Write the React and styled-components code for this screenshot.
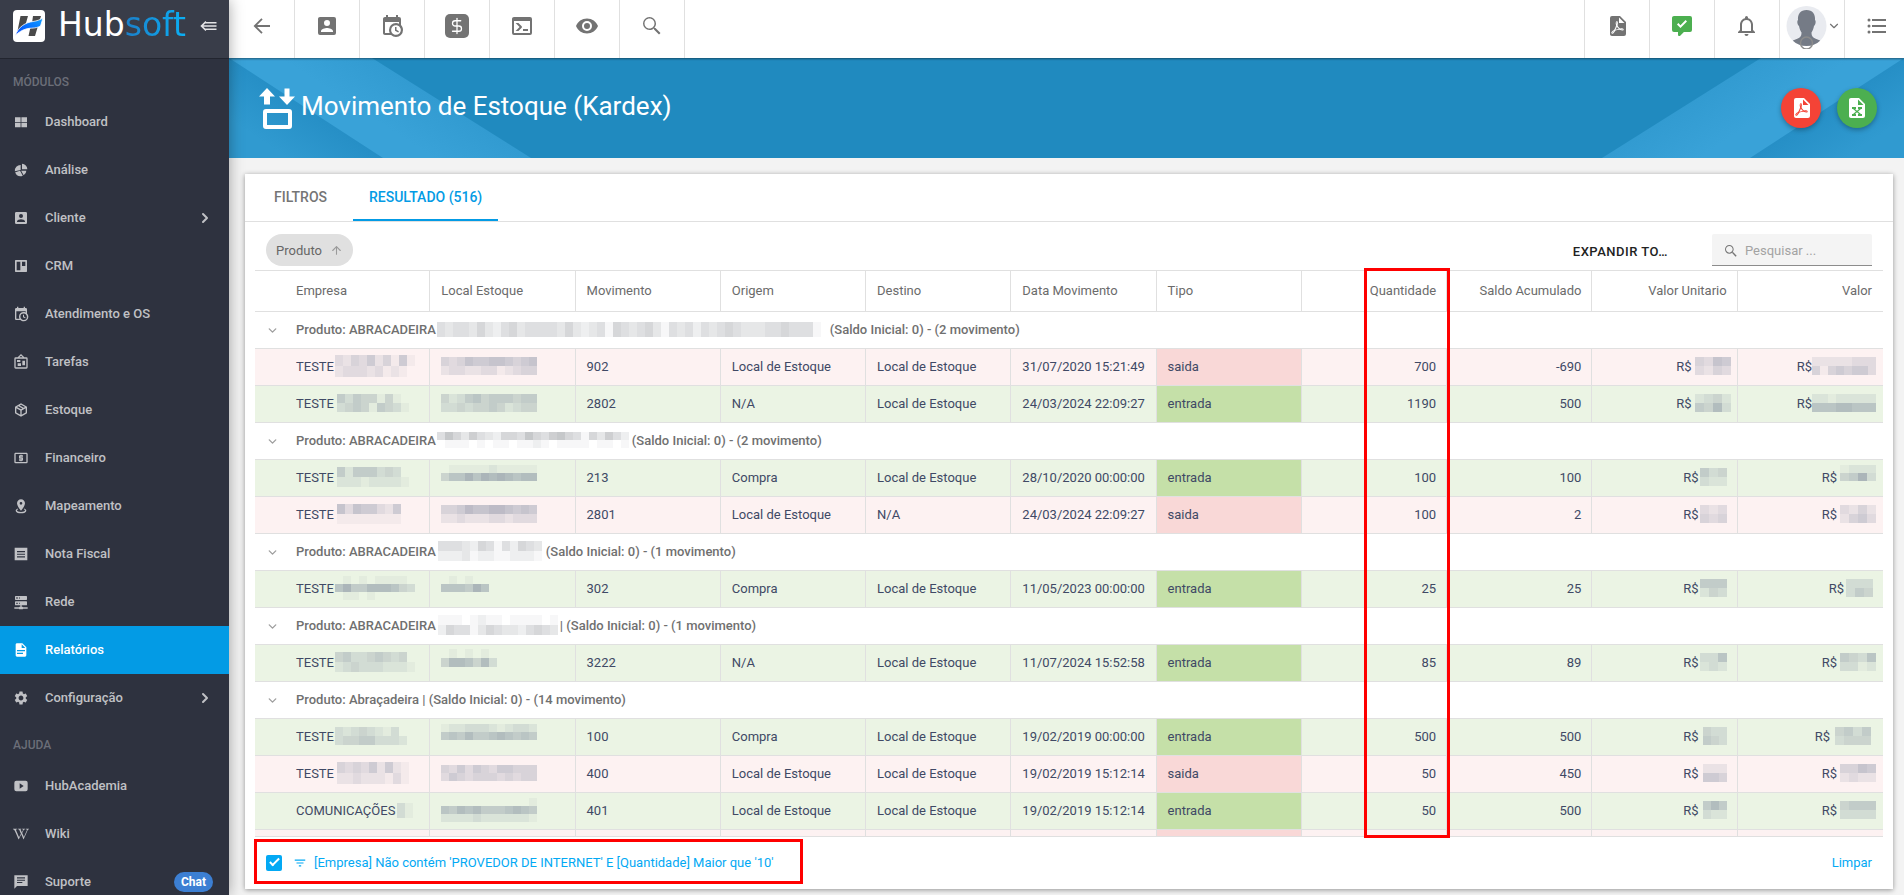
import React from "react";
import styled, { createGlobalStyle, css } from "styled-components";
import { DollarSign, ChevronRight, ChevronDown, ArrowUp } from "lucide-react";
import { MdSettings } from "react-icons/md";
import { FaWikipediaW } from "react-icons/fa";

const Global = createGlobalStyle`
  *, *::before, *::after { box-sizing: border-box; }
  body { margin: 0; font-family: Roboto, "Liberation Sans", sans-serif; font-size: 13px; background: #f3f3f3; }
  button, input { font: inherit; }
  button { border: 0; padding: 0; background: none; color: inherit; cursor: pointer; }
  a { color: inherit; text-decoration: none; }
  svg { display: block; flex: none; }
`;

const paths = {
  accountBox: "M6,17C6,15 10,13.9 12,13.9C14,13.9 18,15 18,17V18H6M15,9A3,3 0 0,1 12,12A3,3 0 0,1 9,9A3,3 0 0,1 12,6A3,3 0 0,1 15,9M3,5V19A2,2 0 0,0 5,21H19A2,2 0 0,0 21,19V5A2,2 0 0,0 19,3H5C3.89,3 3,3.9 3,5Z",
  calendarClock: "M15,13H16.5V15.82L18.94,17.23L18.19,18.53L15,16.69V13M19,8H5V19H9.67C9.24,18.09 9,17.07 9,16A7,7 0 0,1 16,9C17.07,9 18.09,9.24 19,9.67V8M5,21C3.89,21 3,20.1 3,19V5C3,3.89 3.89,3 5,3H6V1H8V3H16V1H18V3H19A2,2 0 0,1 21,5V11.1C22.24,12.36 23,14.09 23,16A7,7 0 0,1 16,23C14.09,23 12.36,22.24 11.1,21H5M16,11.15A4.85,4.85 0 0,0 11.15,16C11.15,18.68 13.32,20.85 16,20.85A4.85,4.85 0 0,0 20.85,16C20.85,13.32 18.68,11.15 16,11.15Z",
  eye: "M12,9A3,3 0 0,0 9,12A3,3 0 0,0 12,15A3,3 0 0,0 15,12A3,3 0 0,0 12,9M12,17A5,5 0 0,1 7,12A5,5 0 0,1 12,7A5,5 0 0,1 17,12A5,5 0 0,1 12,17M12,4.5C7,4.5 2.73,7.61 1,12C2.73,16.39 7,19.5 12,19.5C17,19.5 21.27,16.39 23,12C21.27,7.61 17,4.5 12,4.5Z",
  console: "M20,19V7H4V19H20M20,3A2,2 0 0,1 22,5V19A2,2 0 0,1 20,21H4A2,2 0 0,1 2,19V5C2,3.89 2.9,3 4,3H20M13,17V15H18V17H13M9.58,13L5.57,9H8.4L11.7,12.3C12.09,12.69 12.09,13.33 11.7,13.72L8.42,17H5.59L9.58,13Z",
  bell: "M16,17H7V10.5C7,8 9,6 11.5,6C14,6 16,8 16,10.5M18,16V10.5C18,7.43 15.86,4.86 13,4.18V3.5A1.5,1.5 0 0,0 11.5,2A1.5,1.5 0 0,0 10,3.5V4.18C7.13,4.86 5,7.43 5,10.5V16L3,18V19H20V18M11.5,22A2,2 0 0,0 13.5,20H9.5A2,2 0 0,0 11.5,22Z",
  list: "M7,5H21V7H7V5M7,13V11H21V13H7M4,4.5A1.5,1.5 0 0,1 5.5,6A1.5,1.5 0 0,1 4,7.5A1.5,1.5 0 0,1 2.5,6A1.5,1.5 0 0,1 4,4.5M4,10.5A1.5,1.5 0 0,1 5.5,12A1.5,1.5 0 0,1 4,13.5A1.5,1.5 0 0,1 2.5,12A1.5,1.5 0 0,1 4,10.5M7,19V17H21V19H7M4,16.5A1.5,1.5 0 0,1 5.5,18A1.5,1.5 0 0,1 4,19.5A1.5,1.5 0 0,1 2.5,18A1.5,1.5 0 0,1 4,16.5Z",
  magnify: "M9.5,3A6.5,6.5 0 0,1 16,9.5C16,11.11 15.41,12.59 14.44,13.73L14.71,14H15.5L20.5,19L19,20.5L14,15.5V14.71L13.73,14.44C12.59,15.41 11.11,16 9.5,16A6.5,6.5 0 0,1 3,9.5A6.5,6.5 0 0,1 9.5,3M9.5,4.5C6.7,4.5 4.5,6.7 4.5,9.5C4.5,12.3 6.7,14.5 9.5,14.5C12.3,14.5 14.5,12.3 14.5,9.5C14.5,6.7 12.3,4.5 9.5,4.5Z",
  commentCheck: "M9,22A1,1 0 0,1 8,21V18H4A2,2 0 0,1 2,16V4C2,2.89 2.9,2 4,2H20A2,2 0 0,1 22,4V16A2,2 0 0,1 20,18H13.9L10.2,21.71C10,21.9 9.75,22 9.5,22V22H9M10.47,14L17,7.41L15.6,6L10.47,11.17L8.4,9.09L7,10.5L10.47,14Z",
  pdf: "M14,9H19.5L14,3.5V9M7,2H15L21,8V20A2,2 0 0,1 19,22H7C5.89,22 5,21.1 5,20V4A2,2 0 0,1 7,2M11.93,12.44C12.34,13.34 12.86,14.08 13.46,14.59L13.87,14.91C13,15.07 11.8,15.35 10.53,15.84V15.84L10.42,15.88L10.92,14.84C11.37,13.97 11.7,13.18 11.93,12.44M18.41,16.25C18.59,16.07 18.68,15.84 18.69,15.59C18.72,15.39 18.67,15.2 18.57,15.04C18.28,14.57 17.53,14.35 16.29,14.35L15,14.42L14.13,13.84C13.5,13.32 12.93,12.41 12.53,11.28L12.57,11.14C12.9,9.81 13.21,8.2 12.55,7.54C12.39,7.38 12.17,7.3 11.94,7.3H11.7C11.33,7.3 11,7.69 10.91,8.07C10.54,9.4 10.76,10.13 11.13,11.34V11.35C10.88,12.23 10.56,13.25 10.05,14.28L9.09,16.08L8.2,16.57C7,17.32 6.43,18.16 6.32,18.69C6.28,18.88 6.3,19.05 6.37,19.23L6.4,19.28L6.88,19.59L7.32,19.7C8.13,19.7 9.05,18.75 10.29,16.63L10.47,16.56C11.5,16.23 12.78,16 14.5,15.81C15.53,16.32 16.74,16.55 17.5,16.55C17.94,16.55 18.24,16.44 18.41,16.25M18,15.54L18.09,15.65C18.08,15.75 18.05,15.76 18,15.78H17.96L17.77,15.8C17.31,15.8 16.6,15.61 15.87,15.29C15.96,15.19 16,15.19 16.1,15.19C17.5,15.19 17.9,15.44 18,15.54M8.83,17C8.18,18.19 7.59,18.85 7.14,19C7.19,18.62 7.64,17.96 8.35,17.31L8.83,17M11.85,10.09C11.62,9.19 11.61,8.46 11.78,8.04L11.85,7.92L12,7.97C12.17,8.21 12.19,8.53 12.09,9.07L12.06,9.23L11.9,10.05L11.85,10.09Z",
  excel: "M13,9H18.5L13,3.5V9M6,2H14L20,8V20A2,2 0 0,1 18,22H6C4.89,22 4,21.1 4,20V4C4,2.89 4.89,2 6,2M17,11H13V13H14L12,14.67L10,13H11V11H7V13H8L11,15.5L8,18H7V20H11V18H10L12,16.33L14,18H13V20H17V18H16L13,15.5L16,13H17V11Z",
  filter: "M6,13H18V11H6M3,6V8H21V6M10,18H14V16H10V18Z",
  box: "M21,16.5C21,16.88 20.79,17.21 20.47,17.38L12.57,21.82C12.41,21.94 12.21,22 12,22C11.79,22 11.59,21.94 11.43,21.82L3.53,17.38C3.21,17.21 3,16.88 3,16.5V7.5C3,7.12 3.21,6.79 3.53,6.62L11.43,2.18C11.59,2.06 11.79,2 12,2C12.21,2 12.41,2.06 12.57,2.18L20.47,6.62C20.79,6.79 21,7.12 21,7.5V16.5M12,4.15L10.11,5.22L16,8.61L17.96,7.5L12,4.15M6.04,7.5L12,10.85L13.96,9.75L8.08,6.35L6.04,7.5M5,15.91L11,19.29V12.58L5,9.21V15.91M19,15.91V9.21L13,12.58V19.29L19,15.91Z",
  dashboard: "M3,5H11.4V12H3ZM12.6,5H21V12H12.6ZM3,13.2H11.4V20H3ZM12.6,13.2H21V20H12.6Z",
  pie: "M21.5,11H13.5V2.5A8.5,8.5 0 0,1 21.5,11M20,13A8.5,8.5 0 0,1 16,20L12.2,13H20M11,21.5A8.5,8.5 0 0,1 3.3,15.5L10.6,13L14.7,20.6A8.5,8.5 0 0,1 11,21.5M2.8,14A8.5,8.5 0 0,1 11.5,4.5V12Z",
  trello: "M4,3H20A1,1 0 0,1 21,4V20A1,1 0 0,1 20,21H4A1,1 0 0,1 3,20V4A1,1 0 0,1 4,3M5.5,5.5V18.5H11V5.5H5.5M13.5,5.5V12H18.5V5.5H13.5Z",
  board: "M12.04,2.5L9.53,5H14.53L12.04,2.5M4,7V20H20V7H4M12,0L17,5V5H20A2,2 0 0,1 22,7V20A2,2 0 0,1 20,22H4A2,2 0 0,1 2,20V7A2,2 0 0,1 4,5H7V5L12,0M7,18V14H12V18H7M14,17V10H18V17H14M6,12V9H11V12H6Z",
  cash: "M20,18H4V6H20M20,4H4C2.89,4 2,4.89 2,6V18A2,2 0 0,0 4,20H20A2,2 0 0,0 22,18V6C22,4.89 21.1,4 20,4M11,17H13V16H14A1,1 0 0,0 15,15V12A1,1 0 0,0 14,11H11V10H15V8H13V7H11V8H10A1,1 0 0,0 9,9V12A1,1 0 0,0 10,13H13V14H9V16H11V17Z",
  marker: "M12,2C15.31,2 18,4.66 18,7.95C18,12.41 12,19 12,19C12,19 6,12.41 6,7.95C6,4.66 8.69,2 12,2M12,6A2,2 0 0,0 10,8A2,2 0 0,0 12,10A2,2 0 0,0 14,8A2,2 0 0,0 12,6M20,19C20,21.21 16.42,23 12,23C7.58,23 4,21.21 4,19C4,17.71 5.22,16.56 7.11,15.83L7.75,16.74C6.67,17.19 6,17.81 6,18.5C6,19.88 8.69,21 12,21C15.31,21 18,19.88 18,18.5C18,17.81 17.33,17.19 16.25,16.74L16.89,15.83C18.78,16.56 20,17.71 20,19Z",
  invoice: "M2.5,2.5H21.5V21.5H2.5ZM6,7.5V9.2H18V7.5ZM6,11.5V13.2H18V11.5ZM6,15.5V17.2H18V15.5Z",
  server: "M13,19H14A1,1 0 0,1 15,20H22V22H15A1,1 0 0,1 14,23H10A1,1 0 0,1 9,22H2V20H9A1,1 0 0,1 10,19H11V17H4A1,1 0 0,1 3,16V12A1,1 0 0,1 4,11H20A1,1 0 0,1 21,12V16A1,1 0 0,1 20,17H13V19M4,3H20A1,1 0 0,1 21,4V8A1,1 0 0,1 20,9H4A1,1 0 0,1 3,8V4A1,1 0 0,1 4,3M9,7H10V5H9V7M9,15H10V13H9V15M5,5V7H7V5H5M5,13V15H7V13H5Z",
  document: "M13,9H18.5L13,3.5V9M6,2H14L20,8V20A2,2 0 0,1 18,22H6C4.89,22 4,21.1 4,20V4C4,2.89 4.89,2 6,2M15,18V16H6V18H15M18,14V12H6V14H18Z",
  play: "M5,4H19A3,3 0 0,1 22,7V17A3,3 0 0,1 19,20H5A3,3 0 0,1 2,17V7A3,3 0 0,1 5,4ZM10,8V16L16,12Z",
  message: "M2,2H22V18H6L2,22ZM6,5V6.6H18V5ZM6,8.5V10.1H18V8.5ZM6,12V13.6H14V12Z",
};

const Icon = ({ name, size = 24 }) => (
  <svg width={size} height={size} viewBox="0 0 24 24" fill="currentColor" fillRule="evenodd" aria-hidden="true">
    <path d={paths[name]} />
  </svg>
);

const Shell = styled.div`
  display: grid;
  grid-template-columns: 229px minmax(0, 1fr);
  height: 100vh;
`;

/* ---------- sidebar ---------- */
const Sidebar = styled.aside`
  position: relative;
  z-index: 2;
  overflow: hidden;
  background: #2e323f;
  color: #c0c1c5;
  box-shadow: 0 0 14px rgba(0, 0, 0, 0.35);
`;
const Brand = styled.div`
  display: flex;
  align-items: flex-start;
  gap: 13px;
  height: 59px;
  padding: 10px 0 0 13px;
  background: #393d49;
  border-bottom: 1px solid #22252f;
`;
const BrandName = styled.span`
  font: 33px/30px "DejaVu Sans", sans-serif;
  color: #fff;
  span {
    background: linear-gradient(90deg, #1b7fc9, #0bb0f5);
    -webkit-background-clip: text;
    background-clip: text;
    color: transparent;
  }
`;
const Collapse = styled.button`
  margin: 11px 0 0 auto;
  padding-right: 12px;
  color: #e4e4e6;
`;
const NavTitle = styled.h2`
  margin: 0;
  padding: 14px 13px 0;
  height: ${(p) => (p.$first ? "39px" : "40px")};
  font-size: 12px;
  line-height: 18px;
  font-weight: 500;
  color: #6b6e78;
`;
const NavItem = styled.a`
  display: flex;
  align-items: center;
  height: 48px;
  padding: 0 16px 0 13px;
  gap: 16px;
  font-weight: 500;
  line-height: 18px;
  ${(p) => p.$active && css`background: #039be5; color: #fff;`}
  > :last-child:not(:nth-child(2)) { margin-left: auto; }
`;
const NavLabel = styled.span`
  padding-bottom: 1px;
`;
const Badge = styled.span`
  padding: 0 7px;
  border-radius: 10px;
  background: #3c7fd3;
  color: #fff;
  font-size: 12px;
  font-weight: 700;
  line-height: 20px;
`;

/* ---------- top bar ---------- */
const Main = styled.main`
  display: flex;
  flex-direction: column;
  min-width: 0;
  min-height: 0;
`;
const TopBar = styled.header`
  display: flex;
  justify-content: space-between;
  height: 58px;
  background: #fff;
  color: #737373;
  box-shadow: 0 1px 2px rgba(0, 0, 0, 0.45);
  z-index: 1;
`;
const BarGroup = styled.div`
  display: flex;
  &:first-child { padding-left: 1px; }
`;
const BarButton = styled.button`
  display: flex;
  align-items: center;
  justify-content: center;
  width: ${(p) => (p.$last ? "60px" : "65px")};
  padding: 0 0 6px ${(p) => (p.$last ? "4px" : "0")};
  color: ${(p) => p.$color || "inherit"};
  border-${(p) => p.$side}: 1px solid #e0e0e0;
`;
const DollarBox = styled.span`
  display: grid;
  place-items: center;
  width: 24px;
  height: 24px;
  border-radius: 5px;
  background: #737373;
  color: #fff;
`;

/* ---------- banner ---------- */
const Banner = styled.section`
  position: relative;
  display: flex;
  align-items: center;
  flex: none;
  height: 100px;
  padding: 0 27px 0 30px;
  background: #208abf;
  color: #fff;
  > * { position: relative; }
`;
const Stripes = styled.svg`
  && {
    position: absolute;
    top: 0;
    ${(p) => (p.$right ? "right: 0; transform: scaleX(-1);" : "left: 0;")}
  }
`;
const Title = styled.h1`
  margin: 0 auto 0 6px;
  padding-bottom: 4px;
  font-size: 26px;
  line-height: 32px;
  font-weight: 400;
`;
const Fab = styled.button`
  display: grid;
  place-items: center;
  width: 40px;
  height: 40px;
  margin-left: 16px;
  border-radius: 50%;
  background: ${(p) => p.$color};
  box-shadow: 0 2px 5px rgba(0, 0, 0, 0.3);
`;

/* ---------- card ---------- */
const Card = styled.section`
  display: flex;
  flex-direction: column;
  flex: 1;
  min-height: 0;
  margin: 16px 11px 6px 16px;
  background: #fff;
  box-shadow: 0 1px 5px rgba(0, 0, 0, 0.4);
`;
const Tabs = styled.div`
  display: flex;
  gap: 2px;
  flex: none;
  height: 48px;
  padding-left: 5px;
  border-bottom: 1px solid #e0e0e0;
`;
const Tab = styled.button`
  height: 47px;
  padding: 2px ${(p) => (p.$active ? "16px" : "24px")} ${(p) => (p.$active ? "2px" : "4px")};
  font-size: 14px;
  font-weight: 500;
  color: ${(p) => (p.$active ? "#039be5" : "#757575")};
  border-bottom: ${(p) => (p.$active ? "2px solid #039be5" : "0")};
`;
const Grid = styled.div`
  position: relative;
  display: flex;
  flex-direction: column;
  flex: 1;
  min-height: 0;
  padding: 0 10px;
`;
const Toolbar = styled.div`
  display: flex;
  align-items: center;
  flex: none;
  height: 48px;
  padding: 10px 11px 0;
`;
const Chip = styled.button`
  display: flex;
  align-items: center;
  gap: 8px;
  height: 32px;
  margin: 0 auto 2px 0;
  padding: 0 10px;
  border-radius: 16px;
  background: #e0e0e0;
  color: #666;
  font-weight: 400;
  svg { color: #9a9a9a; }
`;
const ExpandButton = styled.button`
  margin-right: 44px;
  color: #222;
  font-weight: 500;
  letter-spacing: 0.5px;
`;
const Search = styled.label`
  display: flex;
  align-items: center;
  gap: 6px;
  width: 160px;
  height: 32px;
  margin-bottom: 2px;
  padding: 2px 0 0 11px;
  border-bottom: 1px solid #8c8c8c;
  border-radius: 2px 2px 0 0;
  background: #f4f4f4;
  color: #757575;
`;
const SearchInput = styled.input`
  width: 100%;
  min-width: 0;
  padding: 0;
  border: 0;
  outline: 0;
  background: none;
  &::placeholder { color: #a3a3a3; opacity: 1; }
`;
const TableArea = styled.div`
  position: relative;
  display: flex;
  flex: 1;
  min-height: 0;
`;
const TableClip = styled.div`
  flex: 1;
  overflow: hidden;
  border-top: 1px solid #e0e0e0;
  border-bottom: 1px solid #e0e0e0;
`;
const ColumnFrame = styled.div`
  position: absolute;
  top: -2px;
  bottom: -1px;
  right: calc((100% - 30px) * 3 / 11 - 3px);
  width: 86px;
  border: 3px solid #f00;
  pointer-events: none;
`;
const Table = styled.table`
  width: 100%;
  table-layout: fixed;
  border-collapse: separate;
  border-spacing: 0;
  color: #404965;
`;
const Head = styled.th`
  height: 41px;
  padding: 0 ${(p) => (p.$open ? "11px" : "10px")} 2px 11px;
  text-align: ${(p) => p.$align || "left"};
  font-weight: 400;
  color: #6b6b6b;
  border-bottom: 1px solid #e0e0e0;
  border-right: ${(p) => (p.$open ? "0" : "1px")} solid #e0e0e0;
  white-space: nowrap;
`;
const Row = styled.tr`
  background: ${(p) => (p.$kind === "saida" ? "#fdf2f2" : "#ebf4e4")};
`;
const Cell = styled.td`
  height: 37px;
  padding: 0 ${(p) => (p.$open ? "11px" : "10px")} 2px 11px;
  text-align: ${(p) => p.$align || "left"};
  font-weight: 400;
  border-bottom: 1px solid #e0e0e0;
  border-right: ${(p) => (p.$open ? "0" : "1px")} solid #e0e0e0;
  white-space: nowrap;
  ${(p) => p.$kind && css`background: ${p.$kind === "saida" ? "#f9d8d7" : "#c5e0a8"};`}
`;
const Line = styled.div`
  display: flex;
  align-items: center;
  justify-content: ${(p) => (p.$end ? "flex-end" : "flex-start")};
  gap: ${(p) => p.$gap || 0}px;
`;
const GroupCell = styled(Cell)`
  font-weight: 500;
  color: #707070;
  border-right: 0;
`;
const GroupTail = styled.span`
  margin-left: ${(p) => p.$space || 0}px;
`;
const Toggle = styled.button`
  display: block;
  margin-top: 2px;
  color: #9e9e9e;
`;
const HiddenValue = styled.span`
  display: flex;
  align-items: center;
  width: ${(p) => p.$width}px;
  padding-left: ${(p) => p.$gap}px;
`;
const Footer = styled.footer`
  display: flex;
  align-items: center;
  justify-content: space-between;
  flex: none;
  height: 52px;
  padding-right: 11px;
  color: #03a9f4;
`;
const FilterFrame = styled.div`
  display: flex;
  align-items: center;
  height: 45px;
  margin: 0 0 3px -1px;
  padding: 2px 26px 0 9px;
  border: 3px solid #f00;
`;
const Check = styled.input`
  appearance: none;
  display: grid;
  place-items: center;
  width: 16px;
  height: 16px;
  margin: 0 11px 0 0;
  border-radius: 2px;
  background: #03a9f4;
  &::after {
    content: "";
    width: 5px;
    height: 10px;
    margin-top: -3px;
    border: solid #fff;
    border-width: 0 2px 2px 0;
    transform: rotate(45deg);
  }
`;
const FilterLink = styled.a`
  margin-left: 7px;
`;
const ClearLink = styled.a`
  padding-bottom: 2px;
`;

/* Pixelated block hiding a private value: each digit is the darkness of one tile. */
const Mosaic = ({ rows, w = 8, h = 9, tint = "#65718a" }) => {
  const cols = Math.max(...rows.map((r) => r.length));
  return (
    <svg width={cols * w} height={rows.length * h} shapeRendering="crispEdges" aria-hidden="true">
      {rows.flatMap((r, y) =>
        [...r].map((d, x) => (
          <rect key={`${x}-${y}`} x={x * w} y={y * h} width={w} height={h} fill={tint} fillOpacity={Number(d) * 0.06} />
        ))
      )}
    </svg>
  );
};

const modules = [
  ["Dashboard", "dashboard"], ["Análise", "pie"], ["Cliente", "accountBox", true], ["CRM", "trello"],
  ["Atendimento e OS", "calendarClock"], ["Tarefas", "board"], ["Estoque", "box"], ["Financeiro", "cash"],
  ["Mapeamento", "marker"], ["Nota Fiscal", "invoice"], ["Rede", "server"], ["Relatórios", "document"],
];

const L = "Local de Estoque";
const groups = [
  {
    name: "ABRACADEIRA", tail: "(Saldo Inicial: 0) - (2 movimento)", gap: 1, after: 8,
    mask: { rows: ["434435324534444353234154345314342434543334454441"], h: 15, tint: "#777b80" },
    items: [
      { e: "TESTE", em: ["3243524151", "2333231210"], eh: 11, eg: 1, lm: ["434655665456", "233223312344"], mov: "902", o: L, d: L, t: "31/07/2020 15:21:49", k: "saida", q: "700", s: "-690", u: [35, 3, ["4365", "3243"]], uw: 9, v: [60, 0, ["22222333", "41454553"]] },
      { e: "TESTE", em: ["535441410", "345415431"], eg: 3, lm: ["423564555455", "334344542344"], mov: "2802", o: "N/A", d: L, t: "24/03/2024 22:09:27", k: "entrada", q: "1190", s: "500", u: [35, 3, ["2342", "5473"]], uw: 9, v: [60, 0, ["22122222", "66677666"]] },
    ],
  },
  {
    name: "ABRACADEIRA", tail: "(Saldo Inicial: 0) - (2 movimento)", gap: 1, after: 2,
    mask: { rows: ["475364325547546754153642", "011101011011210111101101"], h: 8, tint: "#777b80" },
    items: [
      { e: "TESTE", em: ["52555343", "222122221"], eh: 10, eg: 3, lm: ["011111211111", "466868787677", "0"], lh: 8, mov: "213", o: "Compra", d: L, t: "28/10/2020 00:00:00", k: "entrada", q: "100", s: "100", u: [28, 1, ["534", "322"]], uw: 9, v: [35, 3, ["1222", "4583", "0"]], vw: 9, vh: 8 },
      { e: "TESTE", em: ["63655325", "111111110"], eh: 10, eg: 3, lm: ["445766776565", "223222332333"], mov: "2801", o: L, d: "N/A", t: "24/03/2024 22:09:27", k: "saida", q: "100", s: "2", u: [28, 1, ["323", "434"]], uw: 9, v: [35, 3, ["3242", "2453"]], vw: 9 },
    ],
  },
  {
    name: "ABRACADEIRA", tail: "(Saldo Inicial: 0) - (1 movimento)", gap: 2, after: 2,
    mask: { rows: ["4443254142543", "2223122112221"], h: 10, tint: "#777b80" },
    items: [
      { e: "TESTE", em: ["0101011110", "6855777643", "011010000"], eh: 8, eg: 1, lm: ["010100", "666586", "0"], lh: 8, mov: "302", o: "Compra", d: L, t: "11/05/2023 00:00:00", k: "entrada", q: "25", s: "25", u: [28, 1, ["555", "243"]], uw: 9, v: [28, 2, ["333", "354"]], vw: 9 },
    ],
  },
  {
    name: "ABRACADEIRA", tail: "| (Saldo Inicial: 0) - (1 movimento)", gap: 2, after: 0,
    mask: { rows: ["111012110111101", "254413543324543"], h: 10, tint: "#777b80" },
    items: [
      { e: "TESTE", em: ["453345434", "2343332221"], eh: 10, eg: 1, lm: ["0101010", "4776473", "0"], lh: 9, mov: "3222", o: "N/A", d: L, t: "11/07/2024 15:52:58", k: "entrada", q: "85", s: "89", u: [28, 1, ["336", "232"]], uw: 9, v: [35, 3, ["5436", "3312"]], vw: 9 },
    ],
  },
  {
    name: "Abraçadeira | (Saldo Inicial: 0) - (14 movimento)",
    items: [
      { e: "TESTE", em: ["32343213", "344553332"], eg: 1, lm: ["122333212332", "565755676565", "0"], lh: 8, mov: "100", o: "Compra", d: L, t: "19/02/2019 00:00:00", k: "entrada", q: "500", s: "500", u: [28, 4, ["433", "543"]], uw: 8, v: [42, 5, ["4535", "3444"]], vw: 9 },
      { e: "TESTE", em: ["434352521", "223222131"], eh: 11, eg: 3, lm: ["435354355444", "354344434344"], lh: 8, mov: "400", o: L, d: L, t: "19/02/2019 15:12:14", k: "saida", q: "50", s: "450", u: [28, 4, ["222", "554"]], uw: 8, v: [35, 3, ["4465", "2322"]], vw: 9 },
      { e: "COMUNICAÇÕES", em: ["31"], eh: 15, eg: 2, lm: ["000000000001", "657675556765", "222232222221"], lh: 8, mov: "401", o: L, d: L, t: "19/02/2019 15:12:14", k: "entrada", q: "50", s: "500", u: [28, 4, ["575", "322"]], uw: 8, v: [35, 3, ["4555", "3333"]], vw: 9 },
    ],
  },
];

const Money = ({ data: [width, gap, rows], w, h }) => (
  <Line $end>
    <span>R$</span>
    <HiddenValue $width={width} $gap={gap}><Mosaic rows={rows} w={w} h={h} /></HiddenValue>
  </Line>
);

const DataRow = ({ r }) => (
  <Row $kind={r.k}>
    <Cell $open />
    <Cell><Line $gap={r.eg}>{r.e}<Mosaic rows={r.em} h={r.eh} /></Line></Cell>
    <Cell><Mosaic rows={r.lm} h={r.lh} /></Cell>
    <Cell>{r.mov}</Cell>
    <Cell>{r.o}</Cell>
    <Cell>{r.d}</Cell>
    <Cell>{r.t}</Cell>
    <Cell $kind={r.k}>{r.k}</Cell>
    <Cell $align="right">{r.q}</Cell>
    <Cell $align="right">{r.s}</Cell>
    <Cell $align="right"><Money data={r.u} w={r.uw} /></Cell>
    <Cell $align="right" $open><Money data={r.v} w={r.vw} h={r.vh} /></Cell>
  </Row>
);

const BannerStripes = ({ id, $right }) => (
  <Stripes $right={$right} width="302" height="100" viewBox="0 0 302 100" aria-hidden="true">
    <defs>
      <linearGradient id={`${id}a`} gradientUnits="userSpaceOnUse" x1="76" y1="50" x2="48" y2="93">
        <stop offset="0" stopColor="#268fc6" /><stop offset="1" stopColor="#309ad0" />
      </linearGradient>
      <linearGradient id={`${id}b`} gradientUnits="userSpaceOnUse" x1="222" y1="50" x2="194" y2="93">
        <stop offset="0" stopColor="#329bd1" /><stop offset="1" stopColor="#39a2d8" />
      </linearGradient>
    </defs>
    <path d="M0 0H143L302 100H0Z" fill={`url(#${id}b)`} />
    <path d="M0 0L154 100H0Z" fill={`url(#${id}a)`} />
  </Stripes>
);

const heads = ["Empresa", "Local Estoque", "Movimento", "Origem", "Destino", "Data Movimento", "Tipo"];
const numHeads = ["Quantidade", "Saldo Acumulado", "Valor Unitario", "Valor"];

export default function App() {
  return (
    <>
      <Global />
      <Shell>
        <Sidebar>
          <Brand>
            <svg width="32" height="32" viewBox="0 0 32 32" aria-hidden="true">
              <defs>
                <linearGradient id="swoosh" x1="0" y1="1" x2="1" y2="0">
                  <stop offset="0" stopColor="#0046ff" /><stop offset="1" stopColor="#10a0ff" />
                </linearGradient>
              </defs>
              <rect width="32" height="32" rx="4" fill="#fff" />
              <path d="M7.5 6H15L12 16.5L4.5 21ZM20 6H28L22 26H15.5L17.5 17L19 13Z" fill="#4a4a4a" />
              <path d="M2.5 25.500C5 16.500 13 12.500 20 11.500C24 11 27.500 9.500 30 8L27.500 16C22 19 18 17.500 13 19C9 20.300 5.500 22 2.500 25.500Z" fill="url(#swoosh)" stroke="#fff" strokeWidth=".8" />
            </svg>
            <BrandName>Hub<span>soft</span></BrandName>
            <Collapse aria-label="Recolher menu">
              <svg width="17" height="10" viewBox="0 0 17 10" fill="none" stroke="currentColor" strokeWidth="1.6">
                <path d="M6 .7L1.500 5L6 9.300M5.500 1.800H16.500M2 5H16.500M5.500 8.200H16.500" />
              </svg>
            </Collapse>
          </Brand>
          <nav>
            <NavTitle $first>MÓDULOS</NavTitle>
            {modules.map(([label, icon, sub]) => (
              <NavItem href="#" key={label} $active={label === "Relatórios"}>
                <Icon name={icon} size={16} />
                <NavLabel>{label}</NavLabel>
                {sub && <ChevronRight size={16} strokeWidth={3} />}
              </NavItem>
            ))}
            <NavItem href="#">
              <MdSettings size={16} />
              <NavLabel>Configuração</NavLabel>
              <ChevronRight size={16} strokeWidth={3} />
            </NavItem>
            <NavTitle>AJUDA</NavTitle>
            <NavItem href="#"><Icon name="play" size={16} /><NavLabel>HubAcademia</NavLabel></NavItem>
            <NavItem href="#"><FaWikipediaW size={16} /><NavLabel>Wiki</NavLabel></NavItem>
            <NavItem href="#"><Icon name="message" size={16} /><NavLabel>Suporte</NavLabel><Badge>Chat</Badge></NavItem>
          </nav>
        </Sidebar>

        <Main>
          <TopBar>
            <BarGroup>
              <BarButton $side="right" aria-label="Voltar">
                <svg width="24" height="24" viewBox="0 0 24 24" fill="none" stroke="currentColor" strokeWidth="1.800">
                  <path d="M20 12H5M12 4.800L4.800 12L12 19.200" />
                </svg>
              </BarButton>
              <BarButton $side="right" aria-label="Cliente"><Icon name="accountBox" /></BarButton>
              <BarButton $side="right" aria-label="Agenda"><Icon name="calendarClock" /></BarButton>
              <BarButton $side="right" aria-label="Financeiro"><DollarBox><DollarSign size={18} strokeWidth={1.7} /></DollarBox></BarButton>
              <BarButton $side="right" aria-label="Console"><Icon name="console" /></BarButton>
              <BarButton $side="right" aria-label="Visualizar"><Icon name="eye" /></BarButton>
              <BarButton $side="right" aria-label="Buscar"><Icon name="magnify" /></BarButton>
            </BarGroup>
            <BarGroup>
              <BarButton $side="left" aria-label="PDF"><Icon name="pdf" /></BarButton>
              <BarButton $side="left" $color="#4caf50" aria-label="Mensagens"><Icon name="commentCheck" /></BarButton>
              <BarButton $side="left" aria-label="Notificações"><Icon name="bell" /></BarButton>
              <BarButton $side="left" aria-label="Usuário">
                <svg width="44" height="46" viewBox="-3 -3 44 46">
                  <clipPath id="avatar"><circle cx="20.500" cy="20" r="20" /></clipPath>
                  <circle cx="20.500" cy="20" r="20" fill="#e9ebf0" />
                  <path clipPath="url(#avatar)" d="M20.500 4C26.500 4 29.500 8 29 14C30.300 15 29.500 19 28 20C27.500 23 26.500 25 25.500 26.500C25.500 31 27 32 34 34.500V40H7V34.500C14 32 15.500 31 15.500 26.500C14.500 25 13.500 23 13 20C11.500 19 10.700 15 12 14C11.500 8 14.500 4 20.500 4Z" fill="#757b86" />
                  <circle cx="20.500" cy="37" r="6" fill="none" stroke="#8c8c8c" strokeWidth="1.400" />
                </svg>
                <ChevronDown size={14} />
              </BarButton>
              <BarButton $side="left" $last aria-label="Menu"><Icon name="list" /></BarButton>
            </BarGroup>
          </TopBar>

          <Banner>
            <BannerStripes id="l" />
            <BannerStripes id="r" $right />
            <svg width="36" height="41" viewBox="0 0 36 41" fill="#fff" aria-hidden="true">
              <path d="M8 0L16 8.500H11V16.500H5V8.500H0ZM28 17L20 8.500H25.500V.5H30.500V8.500H36Z" />
              <rect x="6" y="23" width="25" height="16" rx="1" fill="none" stroke="#fff" strokeWidth="4" />
            </svg>
            <Title>Movimento de Estoque (Kardex)</Title>
            <Fab $color="#f44336" aria-label="Exportar PDF"><Icon name="pdf" /></Fab>
            <Fab $color="#4caf50" aria-label="Exportar Excel"><Icon name="excel" /></Fab>
          </Banner>

          <Card>
            <Tabs>
              <Tab>FILTROS</Tab>
              <Tab $active>RESULTADO (516)</Tab>
            </Tabs>
            <Grid>
              <Toolbar>
                <Chip>Produto<ArrowUp size={13} strokeWidth={2} /></Chip>
                <ExpandButton>EXPANDIR TO…</ExpandButton>
                <Search>
                  <Icon name="magnify" size={16} />
                  <SearchInput aria-label="Pesquisar" placeholder="Pesquisar ..." />
                </Search>
              </Toolbar>
              <TableArea>
                <TableClip>
                  <Table>
                    <colgroup><col width="30" /><col span="11" /></colgroup>
                    <thead>
                      <tr>
                        <Head $open />
                        {heads.map((h) => <Head key={h}>{h}</Head>)}
                        {numHeads.map((h) => <Head key={h} $align="right" $open={h === "Valor"}>{h}</Head>)}
                      </tr>
                    </thead>
                    <tbody>
                      {groups.map((g, i) => (
                        <React.Fragment key={i}>
                          <tr>
                            <GroupCell><Toggle aria-label="Recolher grupo"><ChevronDown size={13} strokeWidth={2.5} /></Toggle></GroupCell>
                            <GroupCell colSpan={11}>
                              <Line $gap={g.gap}>
                                <span>Produto: {g.name}</span>
                                {g.mask && <Mosaic {...g.mask} />}
                                {g.tail && <GroupTail $space={g.after}>{g.tail}</GroupTail>}
                              </Line>
                            </GroupCell>
                          </tr>
                          {g.items.map((r) => <DataRow key={r.mov} r={r} />)}
                        </React.Fragment>
                      ))}
                      <Row $kind="saida">
                        <Cell $open />
                        {heads.map((h) => <Cell key={h} $kind={h === "Tipo" ? "saida" : undefined} />)}
                        {numHeads.map((h) => <Cell key={h} $open={h === "Valor"} />)}
                      </Row>
                    </tbody>
                  </Table>
                </TableClip>
                <ColumnFrame />
              </TableArea>
              <Footer>
                <FilterFrame>
                  <Check type="checkbox" defaultChecked aria-label="Ativar filtro" />
                  <Icon name="filter" size={14} />
                  <FilterLink href="#">[Empresa] Não contém 'PROVEDOR DE INTERNET' E [Quantidade] Maior que '10'</FilterLink>
                </FilterFrame>
                <ClearLink href="#">Limpar</ClearLink>
              </Footer>
            </Grid>
          </Card>
        </Main>
      </Shell>
    </>
  );
}
